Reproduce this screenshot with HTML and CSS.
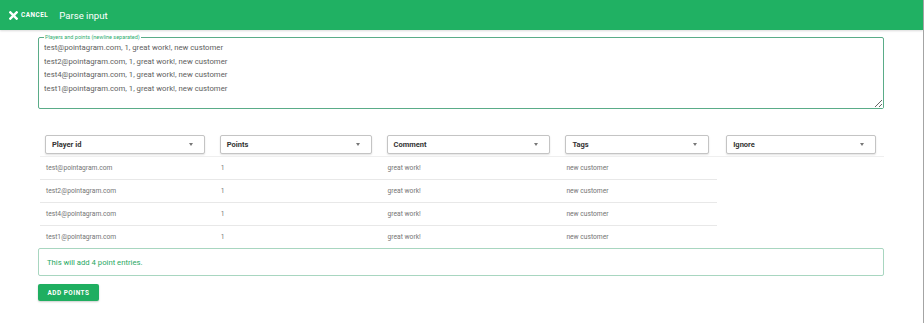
FILE: index.html
```html
<!DOCTYPE html>
<html lang="en">

<head>
    <meta charset="UTF-8">
    <title>Parse input</title>
    <link rel="stylesheet" href="styles.css">
</head>

<body>
    <header id="header">
        <button class="cancelButton">
            <svg width="9" height="9" viewBox="0 0 10 10">
                <path d="M1.5 1.5 L8.5 8.5 M8.5 1.5 L1.5 8.5" stroke="#fff" stroke-width="2.6" stroke-linecap="square" />
            </svg>
            <span>CANCEL</span>
        </button>
        <h1>Parse input</h1>
    </header>
    <section id="content">
        <fieldset class="inputField">
            <legend>Players and points (newline separated)</legend>
            <textarea id="dataInput">test@pointagram.com, 1, great work!, new customer
test2@pointagram.com, 1, great work!, new customer
test4@pointagram.com, 1, great work!, new customer
test1@pointagram.com, 1, great work!, new customer</textarea>
        </fieldset>

        <table class="previewTable">
            <colgroup>
                <col style="width: 173px">
                <col style="width: 167px">
                <col style="width: 179px">
                <col style="width: 159px">
                <col style="width: 167px">
            </colgroup>
            <thead>
                <tr>
                    <th><div class="columnSelect"><span>Player id</span><i class="caret"></i></div></th>
                    <th><div class="columnSelect"><span>Points</span><i class="caret"></i></div></th>
                    <th><div class="columnSelect"><span>Comment</span><i class="caret"></i></div></th>
                    <th><div class="columnSelect"><span>Tags</span><i class="caret"></i></div></th>
                    <th class="ignoreColumn"><div class="columnSelect"><span>Ignore</span><i class="caret"></i></div></th>
                </tr>
            </thead>
            <tbody>
                <tr>
                    <td>test@pointagram.com</td>
                    <td>1</td>
                    <td>great work!</td>
                    <td>new customer</td>
                </tr>
                <tr>
                    <td>test2@pointagram.com</td>
                    <td>1</td>
                    <td>great work!</td>
                    <td>new customer</td>
                </tr>
                <tr>
                    <td>test4@pointagram.com</td>
                    <td>1</td>
                    <td>great work!</td>
                    <td>new customer</td>
                </tr>
                <tr class="lastRow">
                    <td>test1@pointagram.com</td>
                    <td>1</td>
                    <td>great work!</td>
                    <td>new customer</td>
                </tr>
            </tbody>
        </table>

        <div class="infoBox">This will add 4 point entries.</div>
        <button id="addButton">ADD POINTS</button>
    </section>
</body>

</html>
```

FILE: styles.css
```css
body {
    margin: 0;
    padding: 0;
    height: 323px;
    font-family: 'Roboto', sans-serif;
    background-color: #fff;
    border-right: 1px solid #a4a4a4;
    box-sizing: border-box;
    overflow: hidden;
}

#header {
    height: 30px;
    display: flex;
    align-items: center;
    background-color: #20b163;
    box-shadow: 0 1px 2px rgba(0, 0, 0, 0.15);
}

.cancelButton {
    display: flex;
    align-items: center;
    gap: 3px;
    margin-left: 9px;
    padding: 0;
    border: none;
    background: none;
    color: #fff;
    font-family: 'Roboto', sans-serif;
    font-size: 6.4px;
    font-weight: 700;
    letter-spacing: 0.5px;
}

#header h1 {
    margin: 0 0 0 11px;
    color: #fff;
    font-size: 9.6px;
    font-weight: 400;
}

#content {
    padding: 0 39px 0 38px;
}

.inputField {
    margin: 4px 0 0 0;
    padding: 0 0 0 5px;
    border: 1px solid #5aac88;
    border-radius: 2px;
}

.inputField legend {
    padding: 0 1px;
    font-size: 5.5px;
    line-height: 7px;
    color: #2fae70;
}

.inputField textarea {
    display: block;
    width: 100%;
    height: 67px;
    margin: 0;
    padding: 0;
    border: none;
    outline: none;
    resize: vertical;
    box-sizing: border-box;
    font-family: 'Roboto', sans-serif;
    font-size: 7.75px;
    line-height: 13.5px;
    color: #5e5e5e;
}

.previewTable {
    margin: 21px 0 0 2px;
    table-layout: fixed;
    border-collapse: collapse;
}

.previewTable th,
.previewTable td {
    padding: 0 8px 0 7px;
    text-align: left;
}

.previewTable th:first-child,
.previewTable td:first-child {
    padding-left: 5px;
}

.previewTable th {
    padding-top: 5px;
    padding-bottom: 2px;
    border-bottom: 1px solid #efefef;
}

.previewTable th.ignoreColumn {
    padding-left: 9px;
}

.previewTable td {
    height: 22px;
    border-bottom: 1px solid #e8e8e8;
    font-size: 6.7px;
    color: #757575;
    padding-left: 8px;
}

.previewTable td:first-child {
    padding-left: 6px;
}

.previewTable .lastRow td {
    border-bottom: none;
}

.columnSelect {
    height: 19px;
    display: flex;
    align-items: center;
    justify-content: space-between;
    padding: 0 11px 0 6px;
    box-sizing: border-box;
    border: 1px solid #c4c4c4;
    border-radius: 2px;
    box-shadow: 0 1px 2px rgba(0, 0, 0, 0.12);
    background-color: #fff;
    font-size: 7.5px;
    font-weight: 700;
    color: #333;
}

.caret {
    width: 0;
    height: 0;
    border-left: 2.5px solid transparent;
    border-right: 2.5px solid transparent;
    border-top: 3px solid #777;
}

.infoBox {
    margin-top: 0;
    height: 28px;
    box-sizing: border-box;
    display: flex;
    align-items: center;
    padding-left: 8px;
    border: 1px solid #a8d6c0;
    border-radius: 2px;
    font-size: 7.7px;
    color: #27a862;
}

#addButton {
    display: block;
    margin-top: 8px;
    width: 61px;
    height: 17px;
    padding: 0;
    border: none;
    border-radius: 2px;
    background-color: #1fae60;
    box-shadow: 0 1px 2px rgba(0, 0, 0, 0.2);
    color: #fff;
    font-family: 'Roboto', sans-serif;
    font-size: 6.4px;
    font-weight: 700;
    letter-spacing: 0.5px;
}
```
